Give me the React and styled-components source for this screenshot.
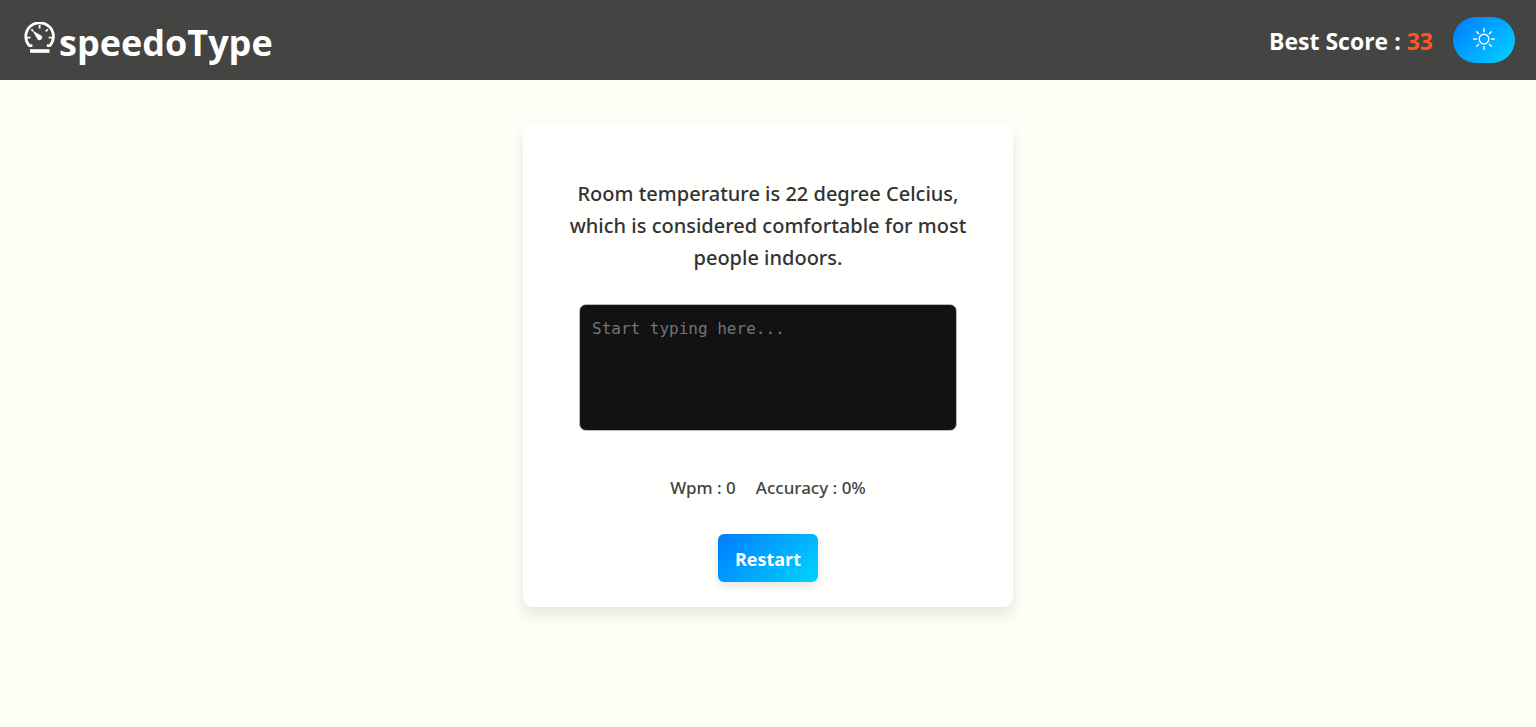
import React, { useState } from "react";
import styled, { createGlobalStyle } from "styled-components";
import { BsSun } from "react-icons/bs";

const GlobalStyle = createGlobalStyle`
  *, *::before, *::after { box-sizing: border-box; }
  body {
    margin: 0;
    background: #fffff8;
    color: #333;
    font-family: "Open Sans", "Noto Sans", sans-serif;
  }
`;

const Header = styled.header`
  display: flex;
  align-items: center;
  justify-content: space-between;
  height: 80px;
  padding: 0 21px 0 24px;
  background: #444442;
  color: #fff;
`;

const Brand = styled.h1`
  display: flex;
  align-items: center;
  gap: 3px;
  margin: 0;
  padding-top: 6px;
  font-size: 36px;
  font-weight: 700;
  line-height: 48px;
`;

const GaugeIcon = styled.svg`
  width: 32px;
  height: 32px;
  margin-bottom: 10px;
`;

const HeaderSide = styled.div`
  display: flex;
  align-items: center;
  gap: 20px;
`;

const BestScore = styled.p`
  margin: 0;
  padding-top: 2px;
  font-size: 23px;
  font-weight: 700;
  line-height: 32px;
`;

const ScoreValue = styled.span`
  color: #ff5722;
`;

const GradientButton = styled.button`
  display: flex;
  align-items: center;
  justify-content: center;
  border: 0;
  background: linear-gradient(135deg, #007bff, #00d4ff);
  color: #fff;
  font-family: inherit;
  cursor: pointer;
`;

const ThemeButton = styled(GradientButton)`
  width: 62px;
  height: 46px;
  padding-bottom: 4px;
  border-radius: 25px;
  font-size: 22px;
`;

const RestartButton = styled(GradientButton)`
  height: 48px;
  padding: 2px 17px 0;
  border-radius: 6px;
  font-size: 18px;
  font-weight: 700;
  box-shadow: 0 4px 8px rgba(0, 0, 0, 0.1);
`;

const Main = styled.main`
  display: flex;
  justify-content: center;
  padding: 42px 16px;
`;

const Card = styled.section`
  display: flex;
  flex-direction: column;
  align-items: center;
  width: 100%;
  max-width: 490px;
  padding: 56px 40px 25px;
  border-radius: 10px;
  background: #fffffe;
  box-shadow: 0 8px 16px rgba(0, 0, 0, 0.1);
`;

const Sentence = styled.p`
  margin: 0 0 30px;
  font-family: "Noto Sans", "Open Sans", sans-serif;
  font-size: 20px;
  font-weight: 500;
  line-height: 32px;
  text-align: center;
`;

const TypingBox = styled.textarea`
  display: block;
  width: 100%;
  max-width: 378px;
  height: 127px;
  padding: 12px;
  border: 1px solid #bbb;
  border-radius: 7px;
  background: #121212;
  color: #fff;
  font-family: "DejaVu Sans Mono", "Liberation Mono", monospace;
  font-size: 16px;
  line-height: 24px;
  resize: none;

  &::placeholder { color: #757575; opacity: 1; }
`;

const Stats = styled.div`
  display: flex;
  gap: 20px;
  margin: 44px 0 33px;
  color: #444;
  font-family: "Noto Sans", "Open Sans", sans-serif;
  font-size: 17px;
  font-weight: 500;
  line-height: 26px;
`;

const Stat = styled.span``;

function Gauge() {
  return (
    <GaugeIcon viewBox="0 0 32 32" fill="none" stroke="#fff" aria-hidden="true">
      <path
        d="M8.4 23.6H5.2A13.8 13.8 0 1 1 26 23.6H22.8"
        strokeWidth="2.8"
        strokeLinejoin="round"
      />
      <path
        d="M15.6 3v3.4M2.5 15.6h4M24.7 15.6h4M23.8 7.4l-2 2M7.4 7.4l1.6 1.6"
        strokeWidth="1.8"
      />
      <path d="M8.4 8.4 17.6 13.8A2.6 2.6 0 1 1 13.4 17Z" fill="#fff" stroke="none" />
      <path d="M6 29H25.5" strokeWidth="3.6" />
    </GaugeIcon>
  );
}

export default function App() {
  const [text, setText] = useState("");

  return (
    <>
      <GlobalStyle />
      <Header>
        <Brand>
          <Gauge />
          speedoType
        </Brand>
        <HeaderSide>
          <BestScore>
            Best Score : <ScoreValue>33</ScoreValue>
          </BestScore>
          <ThemeButton type="button" aria-label="Toggle theme">
            <BsSun />
          </ThemeButton>
        </HeaderSide>
      </Header>
      <Main>
        <Card>
          <Sentence id="sentence">
            Room temperature is 22 degree Celcius, which is considered
            comfortable for most people indoors.
          </Sentence>
          <TypingBox
            aria-labelledby="sentence"
            placeholder="Start typing here..."
            value={text}
            onChange={(event) => setText(event.target.value)}
          />
          <Stats>
            <Stat>Wpm : 0</Stat>
            <Stat>Accuracy : 0%</Stat>
          </Stats>
          <RestartButton type="button" onClick={() => setText("")}>
            Restart
          </RestartButton>
        </Card>
      </Main>
    </>
  );
}
